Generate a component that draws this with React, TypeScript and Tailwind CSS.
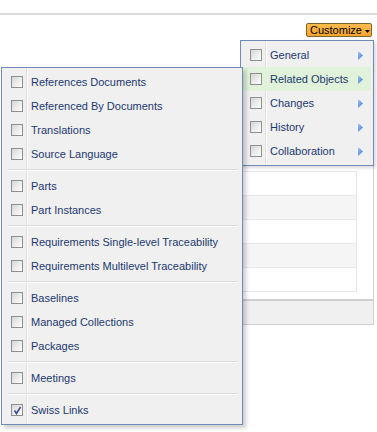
import React from "react";

function Box({ checked }: { checked?: boolean }) {
  return (
    <span className="relative w-[12px] h-[12px] shrink-0 border border-[#8f8f8f] bg-[linear-gradient(135deg,#d6d6d6,#ffffff)]">
      {checked && (
        <svg className="absolute left-[1px] top-[1px]" width="9" height="9" viewBox="0 0 9 9">
          <path d="M1.5 4.5 L3.5 7.5 L7.5 1" fill="none" stroke="#3b4f93" strokeWidth="1.6" />
        </svg>
      )}
    </span>
  );
}

function Arrow() {
  return (
    <svg className="ml-auto mr-[8px]" width="5" height="9" viewBox="0 0 5 9">
      <defs>
        <linearGradient id="ag" x1="0" y1="0" x2="1" y2="1">
          <stop offset="0" stopColor="#a8cdf4" />
          <stop offset="1" stopColor="#2f6fd1" />
        </linearGradient>
      </defs>
      <path d="M0 0 L5 4.5 L0 9 Z" fill="url(#ag)" />
    </svg>
  );
}

function Item({ label, checked, arrow, active }: { label: string; checked?: boolean; arrow?: boolean; active?: boolean }) {
  return (
    <div className={`relative h-[24px] flex items-center rounded-[2px] ${active ? "bg-[#e0f2d9]" : ""}`}>
      <span className="ml-[7px] flex"><Box checked={checked} /></span>
      <span className="ml-[8px] text-[11px] text-[#1c386f] whitespace-nowrap">{label}</span>
      {arrow && <Arrow />}
    </div>
  );
}

function Sep() {
  return (
    <div className="relative h-[8px] pt-[3px] ml-[4px] mr-[2px]">
      <div className="h-px bg-[#dcdcdc]" />
      <div className="h-px bg-white" />
    </div>
  );
}

function Gutter() {
  return (
    <div className="absolute left-[24px] top-0 bottom-0 flex">
      <div className="w-px bg-[#e0e0e0]" />
      <div className="w-px bg-white" />
    </div>
  );
}

export default function App() {
  const rows = [0, 1, 2, 3, 4];
  return (
    <div className="relative w-[377px] h-[432px] bg-white overflow-hidden font-['Liberation_Sans',Arial,sans-serif]">
      <div className="h-[13px]" />
      <div className="h-[2px] bg-[#dadada]" />
      <div className="flex justify-end pr-[5px] pt-[8px]">
        <div className="h-[14px] w-[66px] rounded-[2px] border border-[#7d6330] bg-[linear-gradient(#fdbb4c,#f7a52c)] flex items-center pl-[3px] text-[11px] text-black leading-none">
          <span>Customize</span>
          <svg className="ml-[3px] mt-[3px]" width="5" height="3" viewBox="0 0 5 3">
            <path d="M0 0 L5 0 L2.5 3 Z" fill="#000" />
          </svg>
        </div>
      </div>
      <div className="mt-[3px] mr-[3px] ml-[5px] border-r border-b border-[#d0d0d0]">
        <div className="h-[131px]" />
        <div className="mr-[16px] border-t border-r border-[#e8e8e8]">
          {rows.map((r) => (
            <div key={r} className={`h-[24px] border-b border-[#e8e8e8] ${r % 2 === 1 ? "bg-[#f5f5f5]" : "bg-white"}`} />
          ))}
        </div>
        <div className="h-[7px]" />
        <div className="h-[2px] bg-[#d0d0d0]" />
        <div className="h-[23px] bg-[#f0f0f0]" />
      </div>

      {/* Right (parent) menu */}
      <div className="absolute left-[240px] top-[40px] w-[134px] border border-[#718bb7] bg-[#f0f0f0] p-[2px] shadow-[2px_2px_3px_rgba(0,0,0,0.15)]">
        <Gutter />
        <Item label="General" arrow />
        <Item label="Related Objects" arrow active />
        <Item label="Changes" arrow />
        <Item label="History" arrow />
        <Item label="Collaboration" arrow />
      </div>

      {/* Left (sub) menu */}
      <div className="absolute left-[1px] top-[67px] w-[242px] border border-[#718bb7] bg-[#f0f0f0] p-[2px] shadow-[3px_3px_4px_rgba(0,0,0,0.2)]">
        <Gutter />
        <Item label="References Documents" />
        <Item label="Referenced By Documents" />
        <Item label="Translations" />
        <Item label="Source Language" />
        <Sep />
        <Item label="Parts" />
        <Item label="Part Instances" />
        <Sep />
        <Item label="Requirements Single-level Traceability" />
        <Item label="Requirements Multilevel Traceability" />
        <Sep />
        <Item label="Baselines" />
        <Item label="Managed Collections" />
        <Item label="Packages" />
        <Sep />
        <Item label="Meetings" />
        <Sep />
        <Item label="Swiss Links" checked />
      </div>
    </div>
  );
}
